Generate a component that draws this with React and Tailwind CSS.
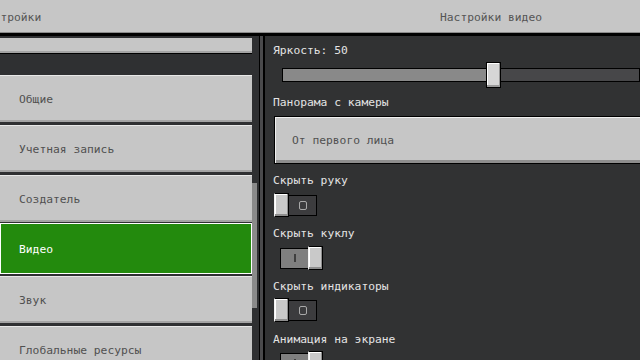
import React from "react";

const font = { fontFamily: '"DejaVu Sans Mono", "Liberation Mono", monospace' };

const navItems = [
  { label: "Общие" },
  { label: "Учетная запись" },
  { label: "Создатель" },
  { label: "Видео", active: true },
  { label: "Звук" },
  { label: "Глобальные ресурсы" },
];

const NavButton = ({ label, active }) => {
  if (active) {
    return (
      <div className="h-[51px] -mt-[2px] -mb-[1px] shrink-0 bg-[#238a0d] border border-white flex items-center pl-[18px] pt-[3px] text-white">
        {label}
      </div>
    );
  }
  return (
    <div className="h-[47px] shrink-0 bg-[#c6c6c6] border-t border-[#e8e8e8] border-b-2 border-b-[#a4a4a4] flex items-center pl-[19px] pt-[4px] text-[#505050]">
      {label}
    </div>
  );
};

const Knob = () => (
  <div className="w-[15px] h-[24px] shrink-0 bg-[#c9c9c9] border border-black border-l-[#f2f2f2] shadow-[inset_-1px_-2px_0_#8e8e8e,inset_1px_1px_0_#ffffff]" />
);

const Toggle = ({ on }) =>
  on ? (
    <div className="w-[49px] h-[24px] flex items-center justify-end">
      <div className="w-[29px] h-[21px] bg-[#7f7f7f] border border-black flex items-center justify-center -mr-[1px]">
        <div className="w-[2px] h-[8px] bg-[#3f3f3f]" />
      </div>
      <Knob />
    </div>
  ) : (
    <div className="w-[49px] h-[24px] flex items-center">
      <Knob />
      <div className="w-[29px] h-[21px] bg-[#3c3c3e] border border-black flex items-center justify-center -ml-[1px]">
        <div className="w-[8px] h-[9px] rounded-[2px] border-[1.5px] border-[#a9a9a9]" />
      </div>
    </div>
  );

const Label = ({ children, className = "" }) => (
  <div className={`h-[14px] shrink-0 leading-[14px] text-[#e4e4e4] ${className}`}>{children}</div>
);

export default function App() {
  return (
    <div className="w-[640px] h-[360px] overflow-hidden bg-[#313233] text-[11.3px] flex flex-col" style={font}>
      <div className="h-[36px] shrink-0 bg-[#c6c6c6] border-b-[3px] border-black flex items-center text-[#555555] shadow-[inset_0_-1px_0_#8b8b8b]">
        <div className="w-[265px] shrink-0 -ml-[20px] pt-[3px]">Настройки</div>
        <div className="pl-[195px] pt-[3px]">Настройки видео</div>
      </div>

      <div className="flex flex-1 min-h-0">
        <div className="w-[259px] shrink-0 flex bg-[#2f3032]">
          <div className="w-[252px] shrink-0 flex flex-col pt-[2px]">
            <div className="h-[15px] shrink-0 bg-[#c6c6c6] border-b-2 border-[#a4a4a4] mb-[22px] shadow-[0_1px_0_#000]" />
            <div className="flex flex-col gap-[3px] shrink-0">
              {navItems.map((item) => (
                <NavButton key={item.label} {...item} />
              ))}
            </div>
          </div>
          <div className="w-[5px] shrink-0 pt-[147px]">
            <div className="h-[125px] bg-[#8a8a8a]" />
          </div>
        </div>
        <div className="w-[1px] shrink-0 bg-black" />
        <div className="w-[3px] shrink-0 bg-[#4a4a4c]" />
        <div className="w-[2px] shrink-0 bg-black" />

        <div className="flex-1 flex flex-col pl-[8px] pt-[8px] bg-[#313233] overflow-hidden">
          <Label>Яркость: 50</Label>
          <div className="relative h-[26px] shrink-0 mt-[4px] ml-[9px] flex items-center">
            <div className="h-[14px] w-full flex border border-black">
              <div className="w-[208px] bg-[#898989]" />
              <div className="flex-1 bg-[#474749]" />
            </div>
            <div className="absolute left-[204px] top-0 w-[15px] h-[26px] bg-[#d6d6d6] border border-black shadow-[inset_-1px_-2px_0_#9a9a9a,inset_1px_1px_0_#ffffff]" />
          </div>

          <Label className="mt-[8px]">Панорама с камеры</Label>
          <div className="h-[48px] shrink-0 mt-[6px] ml-[1px] -mr-[10px] bg-[#c6c6c6] border border-black flex items-center pl-[17px] pt-[2px] text-[#505050] shadow-[inset_1px_1px_0_#f0f0f0,inset_0_-3px_0_#8e8e8e]">
            От первого лица
          </div>

          <Label className="mt-[10px]">Скрыть руку</Label>
          <div className="mt-[5px] ml-[1px] shrink-0">
            <Toggle on={false} />
          </div>

          <Label className="mt-[10px]">Скрыть куклу</Label>
          <div className="mt-[5px] ml-[1px] shrink-0">
            <Toggle on />
          </div>

          <Label className="mt-[10px]">Скрыть индикаторы</Label>
          <div className="mt-[4px] ml-[1px] shrink-0">
            <Toggle on={false} />
          </div>

          <Label className="mt-[11px]">Анимация на экране</Label>
          <div className="mt-[4px] ml-[1px] shrink-0">
            <Toggle on />
          </div>
        </div>
      </div>
    </div>
  );
}
